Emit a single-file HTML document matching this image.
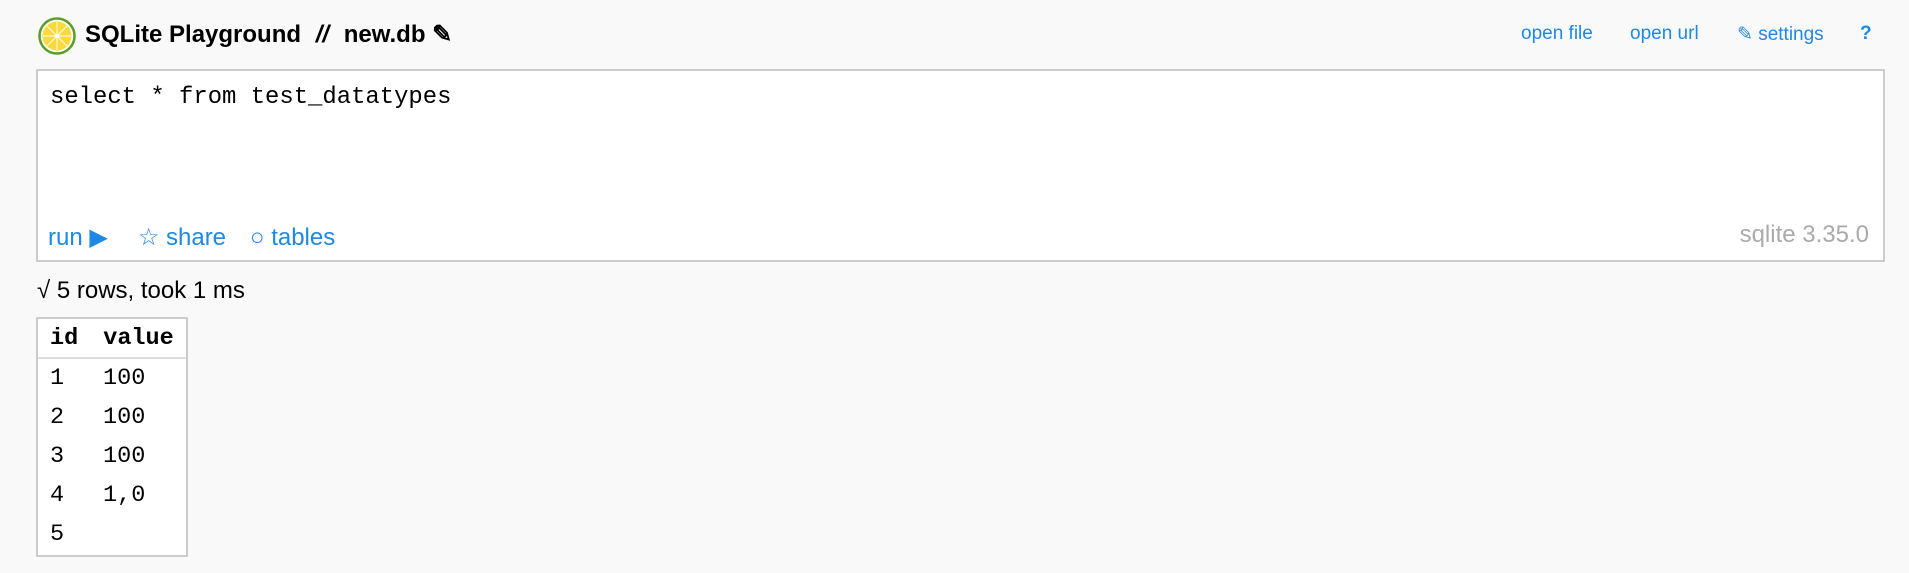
<!DOCTYPE html>
<html><head><meta charset="utf-8"><style>
body{margin:0;width:1909px;height:573px;background:#f9f9f9;font-family:"Liberation Sans",sans-serif;position:relative;overflow:hidden;color:#000}
.a{position:absolute;white-space:nowrap}
.lnk{color:#1e88e5;font-size:19px}
.mono{font-family:"Liberation Mono",monospace}
</style></head><body>
<svg class="a" style="left:38px;top:17px" width="38" height="38" viewBox="0 0 38 38">
<circle cx="19" cy="19" r="17.5" fill="#fff" stroke="#5a9e2a" stroke-width="2.5"/>
<circle cx="19" cy="19" r="14.5" fill="#fbd93a"/>
<g stroke="#fff6c8" stroke-width="1.4">
<line x1="19" y1="5" x2="19" y2="33"/><line x1="5" y1="19" x2="33" y2="19"/>
<line x1="9" y1="9" x2="29" y2="29"/><line x1="29" y1="9" x2="9" y2="29"/></g>
<circle cx="19" cy="19" r="2" fill="#fff"/>
</svg>
<div class="a" style="left:85px;top:20px;font-size:24px;font-weight:bold">SQLite Playground <span style="margin:0 8px;font-style:italic">//</span> new.db ✎</div>
<div class="a lnk" style="left:1521px;top:23px">open file</div>
<div class="a lnk" style="left:1630px;top:23px">open url</div>
<div class="a lnk" style="left:1737px;top:23px">✎ settings</div>
<div class="a lnk" style="left:1860px;top:23px;font-weight:bold">?</div>
<div class="a" style="left:36px;top:69px;width:1845px;height:189px;background:#fff;border:2px solid #ccc"></div>
<div class="a mono" style="left:50px;top:84px;font-size:23.9px">select * from test_datatypes</div>
<div class="a" style="left:48px;top:223px;font-size:24px;color:#1e88e5">run ▶<span style="margin-left:30px">☆ share</span><span style="margin-left:24px">○ tables</span></div>
<div class="a" style="right:40px;top:221px;font-size:24px;color:#aaa">sqlite 3.35.0</div>
<div class="a" style="left:37px;top:277px;font-size:24px">√ 5 rows, took 1 ms</div>
<div class="a" style="left:36px;top:317px;width:148px;height:236px;background:#fff;border:2px solid #ccc"></div>
<div class="a" style="left:38px;top:357px;width:148px;height:2px;background:#ddd"></div>
<div class="a mono" style="left:50px;top:325px;font-size:23.5px;font-weight:bold;line-height:28px">id<span style="margin-left:25px">value</span></div>
<div class="a mono" style="left:50px;top:359px;font-size:23.5px;line-height:39px">1<br>2<br>3<br>4<br>5</div>
<div class="a mono" style="left:103px;top:359px;font-size:23.5px;line-height:39px">100<br>100<br>100<br>1,0</div>
</body></html>
